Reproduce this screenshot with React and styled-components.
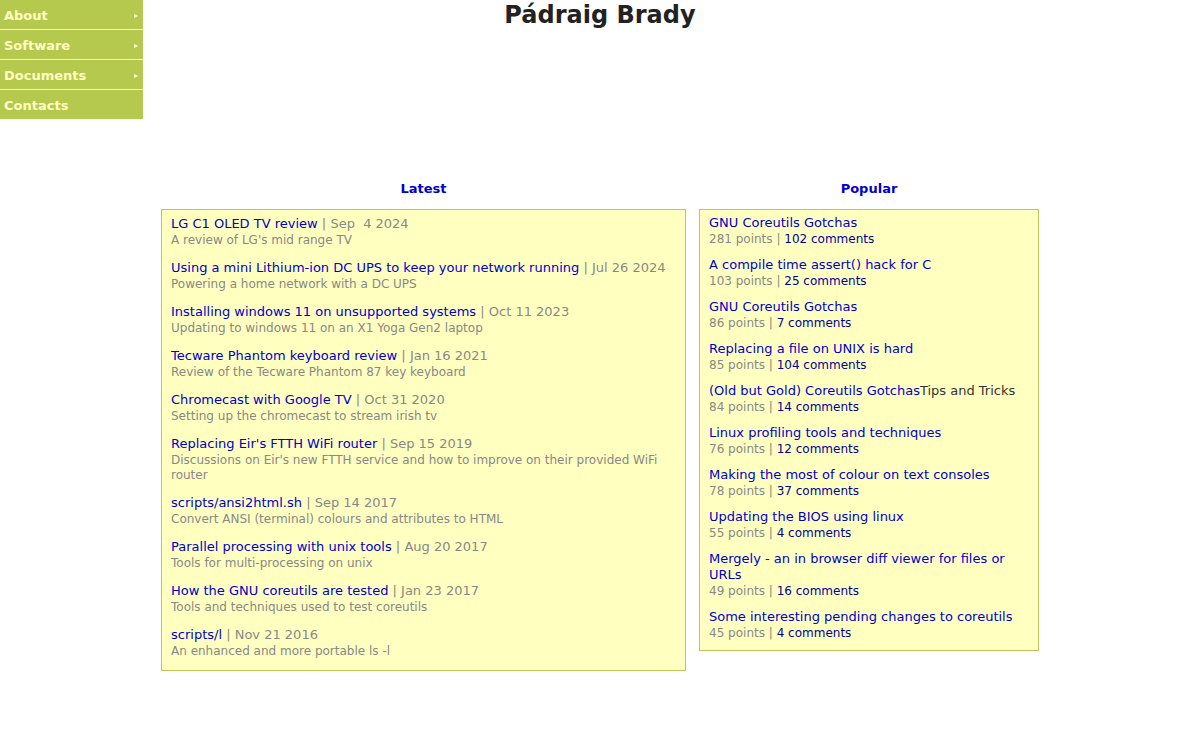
import styled, { createGlobalStyle } from "styled-components";

const GlobalStyle = createGlobalStyle`
  body {
    margin: 0;
    background: #ffffff;
    font-family: "DejaVu Sans", Verdana, sans-serif;
    font-size: 13px;
    color: #333333;
  }
`;

const menu = [
  { label: "About", more: true },
  { label: "Software", more: true },
  { label: "Documents", more: true },
  { label: "Contacts", more: false },
];

const latest = [
  { title: "LG C1 OLED TV review", date: "Sep\u00a0 4 2024", desc: "A review of LG's mid range TV" },
  { title: "Using a mini Lithium-ion DC UPS to keep your network running", date: "Jul 26 2024", desc: "Powering a home network with a DC UPS" },
  { title: "Installing windows 11 on unsupported systems", date: "Oct 11 2023", desc: "Updating to windows 11 on an X1 Yoga Gen2 laptop" },
  { title: "Tecware Phantom keyboard review", date: "Jan 16 2021", desc: "Review of the Tecware Phantom 87 key keyboard" },
  { title: "Chromecast with Google TV", date: "Oct 31 2020", desc: "Setting up the chromecast to stream irish tv" },
  { title: "Replacing Eir's FTTH WiFi router", date: "Sep 15 2019", desc: "Discussions on Eir's new FTTH service and how to improve on their provided WiFi router" },
  { title: "scripts/ansi2html.sh", date: "Sep 14 2017", desc: "Convert ANSI (terminal) colours and attributes to HTML" },
  { title: "Parallel processing with unix tools", date: "Aug 20 2017", desc: "Tools for multi-processing on unix" },
  { title: "How the GNU coreutils are tested", date: "Jan 23 2017", desc: "Tools and techniques used to test coreutils" },
  { title: "scripts/l", date: "Nov 21 2016", desc: "An enhanced and more portable ls -l" },
];

const popular = [
  { title: "GNU Coreutils Gotchas", points: 281, comments: 102 },
  { title: "A compile time assert() hack for C", points: 103, comments: 25 },
  { title: "GNU Coreutils Gotchas", points: 86, comments: 7 },
  { title: "Replacing a file on UNIX is hard", points: 85, comments: 104 },
  { title: "(Old but Gold) Coreutils Gotchas", extra: "Tips and Tricks", points: 84, comments: 14 },
  { title: "Linux profiling tools and techniques", points: 76, comments: 12 },
  { title: "Making the most of colour on text consoles", points: 78, comments: 37 },
  { title: "Updating the BIOS using linux", points: 55, comments: 4 },
  { title: "Mergely - an in browser diff viewer for files or URLs", points: 49, comments: 16 },
  { title: "Some interesting pending changes to coreutils", points: 45, comments: 4 },
];

export default function App() {
  return (
    <Page>
      <GlobalStyle />
      <Header>
        <Menu>
          {menu.map((m) => (
            <MenuItem key={m.label}>
              {m.label}
              {m.more && <Arrow />}
            </MenuItem>
          ))}
        </Menu>
        <Title>Pádraig Brady</Title>
      </Header>
      <Columns>
        <Column $width={525}>
          <Heading>Latest</Heading>
          <Box $top={5} $bottom={11}>
            {latest.map((a) => (
              <Entry key={a.title} $gap={11}>
                <Headline $lh={18}>
                  <Link>{a.title}</Link>
                  <Muted> | {a.date}</Muted>
                </Headline>
                <Small $lh={15}>{a.desc}</Small>
              </Entry>
            ))}
          </Box>
        </Column>
        <Column $width={340}>
          <Heading>Popular</Heading>
          <Box $top={5} $bottom={9}>
            {popular.map((p, i) => (
              <Entry key={i} $gap={10}>
                <Headline $lh={16}>
                  <Link>{p.title}</Link>
                  {p.extra}
                </Headline>
                <Small $lh={16}>
                  {p.points} points | <Comments>{p.comments} comments</Comments>
                </Small>
              </Entry>
            ))}
          </Box>
        </Column>
      </Columns>
    </Page>
  );
}

const Page = styled.div`
  width: 1200px;
  min-height: 740px;
`;

const Header = styled.div`
  display: grid;
  grid-template-columns: 143px 1fr 143px;
  align-items: start;
`;

const Menu = styled.nav`
  display: flex;
  flex-direction: column;
  background: #b5c94f;
`;

const MenuItem = styled.div`
  height: 30px;
  padding: 1px 0 0 4px;
  box-sizing: border-box;
  display: flex;
  align-items: center;
  justify-content: space-between;
  border-bottom: 1px solid #ffff99;
  color: #ffffc0;
  font-weight: bold;
  font-size: 13px;

  &:last-child {
    border-bottom: none;
    height: 29px;
  }
`;

const Arrow = styled.span`
  width: 0;
  height: 0;
  margin-right: 5px;
  margin-top: 2px;
  border-top: 2.5px solid transparent;
  border-bottom: 2.5px solid transparent;
  border-left: 4px solid #ffffe0;
`;

const Title = styled.h1`
  margin: 0;
  font-size: 24px;
  line-height: 30px;
  font-weight: bold;
  text-align: center;
  color: #222222;
`;

const Columns = styled.div`
  display: flex;
  justify-content: center;
  align-items: flex-start;
  gap: 13px;
  margin-top: 62px;
`;

const Column = styled.section`
  width: ${({ $width }) => $width}px;
`;

const Heading = styled.h2`
  margin: 0 0 12px 0;
  font-size: 13px;
  line-height: 16px;
  font-weight: bold;
  text-align: center;
  color: #0000cc;
`;

const Box = styled.div`
  background: #ffffc0;
  border: 1px solid #bcc65a;
  padding: ${({ $top }) => $top}px 9px ${({ $bottom }) => $bottom}px 9px;
`;

const Entry = styled.div`
  margin-bottom: ${({ $gap }) => $gap}px;

  &:last-child {
    margin-bottom: 0;
  }
`;

const Headline = styled.div`
  font-size: 13px;
  line-height: ${({ $lh }) => $lh}px;
`;

const Small = styled.div`
  font-size: 12px;
  line-height: ${({ $lh }) => $lh}px;
  color: #888888;
`;

const Link = styled.a`
  color: #0000cc;
  text-decoration: none;
`;

const Muted = styled.span`
  color: #888888;
`;

const Comments = styled.a`
  color: #000099;
  text-decoration: none;
`;
